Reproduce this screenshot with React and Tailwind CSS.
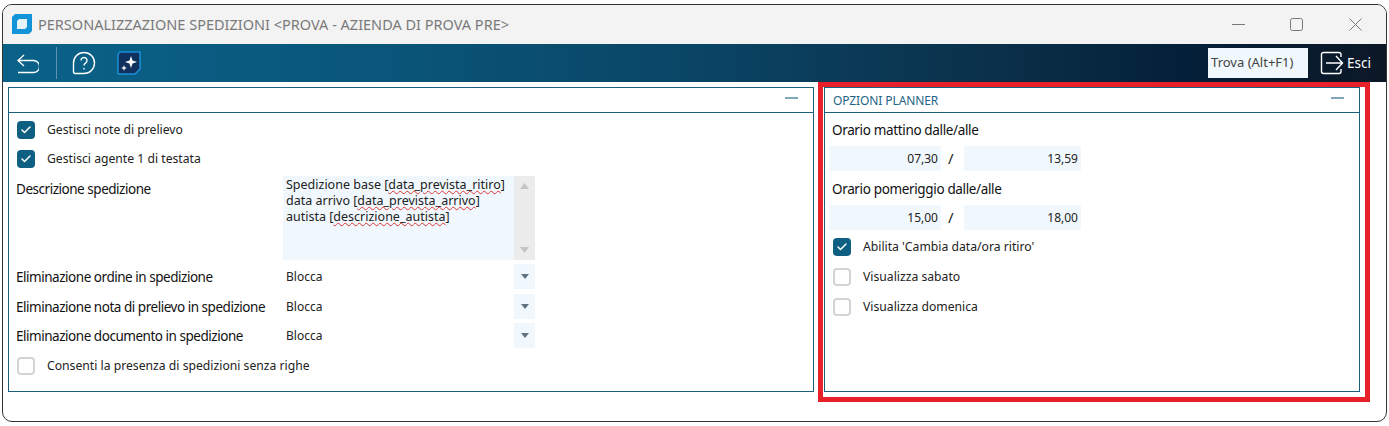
import React from 'react'
import { Check } from 'lucide-react'

const FONT = "font-['Noto_Sans','Liberation_Sans',sans-serif]"

function CheckRow({ label, checked, className = '' }) {
  return (
    <div className={`flex items-center h-[18px] ${className}`}>
      <span
        className={
          checked
            ? 'flex items-center justify-center w-[18px] h-[18px] rounded-[4px] bg-[#0f5f82]'
            : 'w-[18px] h-[18px] rounded-[4px] border-2 border-[#d4d4d4] bg-white'
        }
      >
        {checked && <Check size={12} strokeWidth={3} className="text-white" />}
      </span>
      <span className="ml-[12px] text-[12.2px] text-[#222] whitespace-nowrap">{label}</span>
    </div>
  )
}

function SelectRow({ label, className = '' }) {
  return (
    <div className={`flex items-center h-[25px] ${className}`}>
      <span className="w-[267px] pt-[2px] text-[13.5px] tracking-[-0.47px] text-[#111] whitespace-nowrap">{label}</span>
      <span className="w-[231px] pl-[3px] text-[12px] text-[#222]">Blocca</span>
      <span className="flex items-center justify-center w-[21px] h-[25px] bg-[#f1f8fd]">
        <svg width="8" height="5" viewBox="0 0 8 5">
          <path d="M0 0h8L4 5z" fill="#5f7382" />
        </svg>
      </span>
    </div>
  )
}

function TimeRow({ from, to, className = '' }) {
  return (
    <div className={`flex items-center ${className}`}>
      <span className="w-[112px] h-[25px] pr-[3px] flex items-center justify-end bg-[#f1f8fd] text-[12px] text-[#222]">{from}</span>
      <span className="w-[23px] pl-[7px] text-[15px] text-[#222]">/</span>
      <span className="w-[117px] h-[25px] pr-[3px] flex items-center justify-end bg-[#f1f8fd] text-[12px] text-[#222]">{to}</span>
    </div>
  )
}

function PanelHeader({ title }) {
  return (
    <div className="flex items-center justify-between h-[25px] border-b border-[#1c5f7c] pl-[8px] pr-[15px]">
      <span className="mt-[2px] text-[12px] tracking-[-0.1px] text-[#1f6485] whitespace-nowrap">{title}</span>
      <span className="w-[13px] h-[2px] mb-[5px] bg-[#7fa6b8]" />
    </div>
  )
}

export default function App() {
  return (
    <div className={`relative w-[1389px] h-[426px] bg-white overflow-hidden pt-[4px] pl-[2px] ${FONT}`}>
      <div className="w-[1385px] h-[418px] border border-[#333] rounded-[10px] overflow-hidden bg-white">
        {/* title bar */}
        <div className="flex items-center h-[39px] bg-[#f3f3f3]">
          <svg width="20" height="20" viewBox="0 0 20 20" className="ml-[9px] mb-[1px]">
            <path d="M3 0h17v17l-3 3H0V3z" fill="#1295d8" />
            <path d="M7 5h8v8l-2 2H5V7z" fill="#e6f4fc" />
          </svg>
          <span className="ml-[6px] text-[14.5px] text-[#7a7a7a] whitespace-nowrap">
            {'PERSONALIZZAZIONE SPEDIZIONI <PROVA - AZIENDA DI PROVA PRE>'}
          </span>
          <div className="flex items-center ml-auto mr-[24px]">
            <svg width="13" height="13" viewBox="0 0 13 13" stroke="#777" fill="none">
              <path d="M0 6.500h13" />
            </svg>
            <svg width="13" height="13" viewBox="0 0 13 13" stroke="#777" fill="none" className="ml-[45px]">
              <rect x="0.500" y="0.500" width="12" height="12" rx="2" />
            </svg>
            <svg width="13" height="13" viewBox="0 0 13 13" stroke="#777" fill="none" className="ml-[46px]">
              <path d="M0.500 0.500l12 12M12.500 0.500l-12 12" />
            </svg>
          </div>
        </div>

        {/* toolbar */}
        <div className="flex items-center h-[38px] bg-[linear-gradient(90deg,#0a6289_0%,#0a5478_30%,#0a4565_50%,#0b3049_72%,#04203a_85%,#0c1826_100%)]">
          <svg width="22" height="20" viewBox="0 0 22 20" fill="none" stroke="#fff" strokeWidth="1.3" className="ml-[14px] mt-[2px]">
            <path d="M7 1 1 6.500 7 12" />
            <path d="M1 6.500h15.500a5.500 5.500 0 0 1 0 12H1" />
          </svg>
          <span className="ml-[17px] w-px h-[32px] bg-[#5d93ad]" />
          <svg width="24" height="24" viewBox="0 0 24 24" fill="none" stroke="#fff" strokeWidth="1.4" className="ml-[15px]">
            <path d="M12 1.500a10.500 10.500 0 1 1 0 21H3a1.500 1.500 0 0 1-1.500-1.500v-9A10.500 10.500 0 0 1 12 1.500z" />
            <path d="M9 9.500a3 3 0 1 1 4.500 2.600c-1 .6-1.500 1.200-1.500 2.400" />
            <path d="M12 17v1.500" />
          </svg>
          <svg width="24" height="24" viewBox="0 0 24 24" className="ml-[21px]">
            <path d="M3 1h20v17l-5 5H1V3z" fill="#10315e" stroke="#1b8fd8" strokeWidth="1.500" />
            <path d="M14 5l1.500 4.500L20 11l-4.500 1.500L14 17l-1.500-4.500L8 11l4.500-1.500z" fill="#fff" />
            <path d="M7 14l.8 2.200L10 17l-2.200.8L7 20l-.8-2.200L4 17l2.200-.8z" fill="#fff" />
          </svg>
          <div className="ml-auto flex items-center">
            <span className="flex items-center w-[100px] h-[30px] pl-[3px] bg-[#f1f8fd] text-[13px] text-[#444] whitespace-nowrap">Trova (Alt+F1)</span>
            <svg width="24" height="24" viewBox="0 0 24 24" fill="none" stroke="#fff" strokeWidth="1.4" className="ml-[12px]">
              <path d="M21 6V3.500A2 2 0 0 0 19 1.500H3.500a2 2 0 0 0-2 2v17a2 2 0 0 0 2 2H19a2 2 0 0 0 2-2V18" />
              <path d="M6 12h16M16 5l6.500 7-6.500 7" />
            </svg>
            <span className="ml-[3px] mr-[15px] text-[13.5px] text-white">Esci</span>
          </div>
        </div>

        {/* panels */}
        <div className="flex pt-[5px] pl-[5px]">
          <section className="w-[806px] h-[305px] border border-[#1c5f7c]">
            <PanelHeader title="" />
            <div className="pl-[7px] pt-[8px]">
              <CheckRow label="Gestisci note di prelievo" checked className="ml-[1px]" />
              <CheckRow label="Gestisci agente 1 di testata" checked className="ml-[1px] mt-[11px]" />
              <div className="flex mt-[8px]">
                <span className="w-[267px] pt-[3px] text-[13.5px] tracking-[-0.47px] text-[#111]">Descrizione spedizione</span>
                <div className="flex w-[252px] h-[84px] bg-[#f1f8fd]">
                  <p className="flex-1 pl-[3px] pt-[1px] text-[12.5px] leading-[16px] text-[#222] whitespace-nowrap">
                    Spedizione base [<span className="underline decoration-wavy decoration-[#d33] decoration-1">data_prevista_ritiro</span>]
                    <br />
                    data arrivo [<span className="underline decoration-wavy decoration-[#d33] decoration-1">data_prevista_arrivo</span>]
                    <br />
                    autista [<span className="underline decoration-wavy decoration-[#d33] decoration-1">descrizione_autista</span>]
                  </p>
                  <div className="flex flex-col items-center justify-between w-[21px] py-[7px] bg-[#ececec]">
                    <svg width="9" height="6" viewBox="0 0 9 6"><path d="M0 6h9L4.500 0z" fill="#c4c4c4" /></svg>
                    <svg width="9" height="6" viewBox="0 0 9 6"><path d="M0 0h9L4.500 6z" fill="#c4c4c4" /></svg>
                  </div>
                </div>
              </div>
              <SelectRow label="Eliminazione ordine in spedizione" className="mt-[4px]" />
              <SelectRow label="Eliminazione nota di prelievo in spedizione" className="mt-[5px]" />
              <SelectRow label="Eliminazione documento in spedizione" className="mt-[4px]" />
              <CheckRow label="Consenti la presenza di spedizioni senza righe" className="ml-[1px] mt-[9px]" />
            </div>
          </section>

          <section className="w-[536px] h-[305px] ml-[10px] border border-[#1c5f7c]">
            <PanelHeader title="OPZIONI PLANNER" />
            <div className="pl-[4px]">
              <p className="mt-[7px] pl-[3px] h-[18px] text-[13.5px] tracking-[-0.35px] text-[#111]">Orario mattino dalle/alle</p>
              <TimeRow from="07,30" to="13,59" className="mt-[8px]" />
              <p className="mt-[8px] pl-[3px] h-[18px] text-[13.5px] tracking-[-0.35px] text-[#111]">Orario pomeriggio dalle/alle</p>
              <TimeRow from="15,00" to="18,00" className="mt-[8px]" />
              <div className="pl-[4px]">
                <CheckRow label="Abilita 'Cambia data/ora ritiro'" checked className="mt-[8px]" />
                <CheckRow label="Visualizza sabato" className="mt-[12px]" />
                <CheckRow label="Visualizza domenica" className="mt-[12px]" />
              </div>
            </div>
          </section>
        </div>
      </div>

      {/* red highlight drawn over the screenshot */}
      <div className="absolute left-[818px] top-[82px] w-[552px] h-[320px] border-[5px] border-[#e8202a] pointer-events-none" />
    </div>
  )
}
